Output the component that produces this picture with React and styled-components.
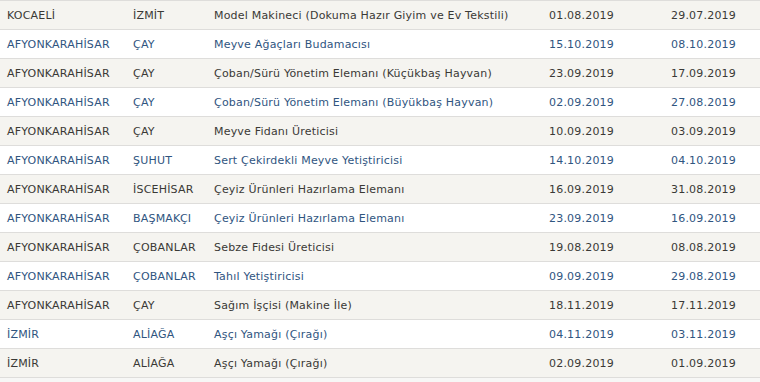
import React from "react";
import styled, { createGlobalStyle } from "styled-components";

const GlobalStyle = createGlobalStyle`
	html, body {
		margin: 0;
		padding: 0;
		background: #f7f7f6;
	}
	body {
		font-family: "DejaVu Sans", Verdana, sans-serif;
	}
`;

const rows = [
	["KOCAELİ", "İZMİT", "Model Makineci (Dokuma Hazır Giyim ve Ev Tekstili)", "01.08.2019", "29.07.2019"],
	["AFYONKARAHİSAR", "ÇAY", "Meyve Ağaçları Budamacısı", "15.10.2019", "08.10.2019"],
	["AFYONKARAHİSAR", "ÇAY", "Çoban/Sürü Yönetim Elemanı (Küçükbaş Hayvan)", "23.09.2019", "17.09.2019"],
	["AFYONKARAHİSAR", "ÇAY", "Çoban/Sürü Yönetim Elemanı (Büyükbaş Hayvan)", "02.09.2019", "27.08.2019"],
	["AFYONKARAHİSAR", "ÇAY", "Meyve Fidanı Üreticisi", "10.09.2019", "03.09.2019"],
	["AFYONKARAHİSAR", "ŞUHUT", "Sert Çekirdekli Meyve Yetiştiricisi", "14.10.2019", "04.10.2019"],
	["AFYONKARAHİSAR", "İSCEHİSAR", "Çeyiz Ürünleri Hazırlama Elemanı", "16.09.2019", "31.08.2019"],
	["AFYONKARAHİSAR", "BAŞMAKÇI", "Çeyiz Ürünleri Hazırlama Elemanı", "23.09.2019", "16.09.2019"],
	["AFYONKARAHİSAR", "ÇOBANLAR", "Sebze Fidesi Üreticisi", "19.08.2019", "08.08.2019"],
	["AFYONKARAHİSAR", "ÇOBANLAR", "Tahıl Yetiştiricisi", "09.09.2019", "29.08.2019"],
	["AFYONKARAHİSAR", "ÇAY", "Sağım İşçisi (Makine İle)", "18.11.2019", "17.11.2019"],
	["İZMİR", "ALİAĞA", "Aşçı Yamağı (Çırağı)", "04.11.2019", "03.11.2019"],
	["İZMİR", "ALİAĞA", "Aşçı Yamağı (Çırağı)", "02.09.2019", "01.09.2019"],
];

const List = styled.div`
	width: 760px;
	border-top: 1px solid #dedddb;
	font-size: 11px;
	letter-spacing: 0.2px;
`;

const Row = styled.div`
	display: grid;
	grid-template-columns: 126px 81px 335px 122px 1fr;
	height: 28px;
	align-items: center;
	background: ${props => (props.striped ? "#f5f4f0" : "#ffffff")};
	color: ${props => (props.striped ? "#3a3936" : "#30557f")};
	border-bottom: 1px solid #dedddb;
`;

const Cell = styled.div`
	padding-left: 7px;
	white-space: nowrap;
	overflow: hidden;
`;

export default function App() {
	return (
		<>
			<GlobalStyle />
			<List>
				{rows.map((r, i) => (
					<Row key={i} striped={i % 2 === 0}>
						{r.map((c, j) => (
							<Cell key={j}>{c}</Cell>
						))}
					</Row>
				))}
			</List>
		</>
	);
}
